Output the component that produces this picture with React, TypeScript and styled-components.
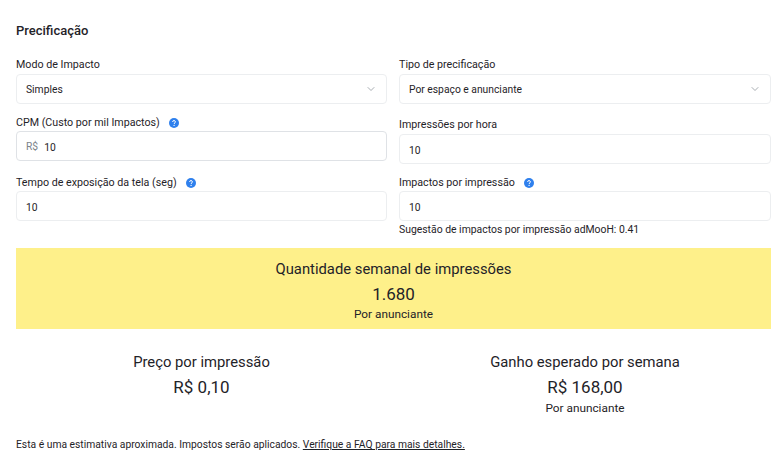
import React from 'react'
import styled, { createGlobalStyle } from 'styled-components'
import { ChevronDown } from 'lucide-react'

const GlobalStyle = createGlobalStyle`
  html, body {
    margin: 0;
    padding: 0;
    background: #fff;
  }
  body {
    font-family: 'Roboto', 'Noto Sans', sans-serif;
    color: #1f2328;
  }
`

const HelpIcon = () => (
  <HelpSvg viewBox="0 0 16 16">
    <circle cx="8" cy="8" r="8" fill="#2f80ed" />
    <path
      d="M5.7 6.2c0-1.3 1-2.1 2.3-2.1s2.3.8 2.3 2c0 1.8-2.2 1.8-2.2 3.4"
      fill="none"
      stroke="#fff"
      strokeWidth="1.6"
    />
    <circle cx="8.1" cy="11.9" r="1" fill="#fff" />
  </HelpSvg>
)

const Field = ({
  label,
  help,
  children,
  top = 0,
  labelGap = 1,
}: {
  label: string
  help?: boolean
  top?: number
  labelGap?: number
  children: React.ReactNode
}) => (
  <FieldWrap $top={top}>
    <Label $gap={labelGap}>
      {label}
      {help && <HelpIcon />}
    </Label>
    {children}
  </FieldWrap>
)

export default function App() {
  return (
    <Page>
      <GlobalStyle />
      <Title>Precificação</Title>
      <Form>
        <Column>
          <Field label="Modo de Impacto" labelGap={2}>
            <Control>
              <span>Simples</span>
              <Chevron />
            </Control>
          </Field>
          <Field label="CPM (Custo por mil Impactos)" help top={10}>
            <Control $strong>
              <Prefix>R$</Prefix>
              <Value>10</Value>
            </Control>
          </Field>
          <Field label="Tempo de exposição da tela (seg)" help top={13}>
            <Control>
              <Value>10</Value>
            </Control>
          </Field>
        </Column>
        <Column>
          <Field label="Tipo de precificação" labelGap={2}>
            <Control>
              <span>Por espaço e anunciante</span>
              <Chevron />
            </Control>
          </Field>
          <Field label="Impressões por hora" top={12} labelGap={2}>
            <Control>
              <Value>10</Value>
            </Control>
          </Field>
          <Field label="Impactos por impressão" help top={10}>
            <Control>
              <Value>10</Value>
            </Control>
            <Hint>Sugestão de impactos por impressão adMooH: 0.41</Hint>
          </Field>
        </Column>
      </Form>
      <Banner>
        <StatTitle>Quantidade semanal de impressões</StatTitle>
        <StatValue>1.680</StatValue>
        <StatNote>Por anunciante</StatNote>
      </Banner>
      <Results>
        <Result>
          <StatTitle>Preço por impressão</StatTitle>
          <StatValue>R$ 0,10</StatValue>
        </Result>
        <Result>
          <StatTitle>Ganho esperado por semana</StatTitle>
          <StatValue>R$ 168,00</StatValue>
          <StatNote>Por anunciante</StatNote>
        </Result>
      </Results>
      <Footnote>
        Esta é uma estimativa aproximada. Impostos serão aplicados. <FaqLink href="#">Verifique a FAQ para mais detalhes.</FaqLink>
      </Footnote>
    </Page>
  )
}

const Page = styled.div`
  width: 784px;
  height: 468px;
  box-sizing: border-box;
  padding: 21px 13px 0 16px;
  overflow: hidden;
`

const Title = styled.h2`
  margin: 0 0 16px;
  font-size: 13px;
  line-height: 19px;
  font-weight: 500;
`

const Form = styled.div`
  display: grid;
  grid-template-columns: 371px 372px;
  column-gap: 12px;
`

const Column = styled.div`
  display: flex;
  flex-direction: column;
  height: 165px;
`

const FieldWrap = styled.div<{ $top: number }>`
  position: relative;
  margin-top: ${({ $top }) => $top}px;
`

const Label = styled.div<{ $gap: number }>`
  display: flex;
  align-items: center;
  box-sizing: border-box;
  height: 16px;
  padding-top: 2px;
  font-size: 10.7px;
  line-height: 14px;
  margin-bottom: ${({ $gap }) => $gap}px;
`

const HelpSvg = styled.svg`
  width: 10px;
  height: 10px;
  margin-left: 9px;
`

const Control = styled.div<{ $strong?: boolean }>`
  display: flex;
  align-items: center;
  justify-content: ${({ $strong }) => ($strong ? 'flex-start' : 'space-between')};
  box-sizing: border-box;
  height: 30px;
  padding: 0 9px;
  font-size: 10.3px;
  border: 1px solid ${({ $strong }) => ($strong ? '#dfe2e6' : '#eceef0')};
  border-radius: 4px;
  background: #fff;
`

const Chevron = styled(ChevronDown)`
  width: 12px;
  height: 12px;
  color: #8b9198;
  stroke-width: 1.5;
`

const Prefix = styled.span`
  color: #7c838b;
  margin-right: 6px;
`

const Value = styled.span`
  padding-top: 2px;
`

const Hint = styled.div`
  position: absolute;
  top: 100%;
  left: 0;
  margin-top: 2px;
  white-space: nowrap;
  font-size: 10.4px;
  line-height: 14px;
`

const Banner = styled.section`
  margin-top: 27px;
  height: 81px;
  background: #fef08a;
  text-align: center;
  padding-top: 12px;
  box-sizing: border-box;
`

const StatTitle = styled.div`
  font-size: 14.8px;
  line-height: 19px;
`

const StatValue = styled.div`
  font-size: 17px;
  line-height: 22px;
  margin-top: 4px;
`

const StatNote = styled.div`
  font-size: 11.8px;
  line-height: 15px;
  margin-top: 2px;
`

const Results = styled.div`
  display: grid;
  grid-template-columns: 371px 372px;
  column-gap: 12px;
  margin-top: 24px;
  height: 76px;
`

const Result = styled.div`
  text-align: center;

  ${StatNote} {
    margin-top: 3px;
  }
`

const Footnote = styled.p`
  margin: 9px 0 0;
  font-size: 10.3px;
  line-height: 14px;
`

const FaqLink = styled.a`
  color: inherit;
  text-decoration: underline;
`
